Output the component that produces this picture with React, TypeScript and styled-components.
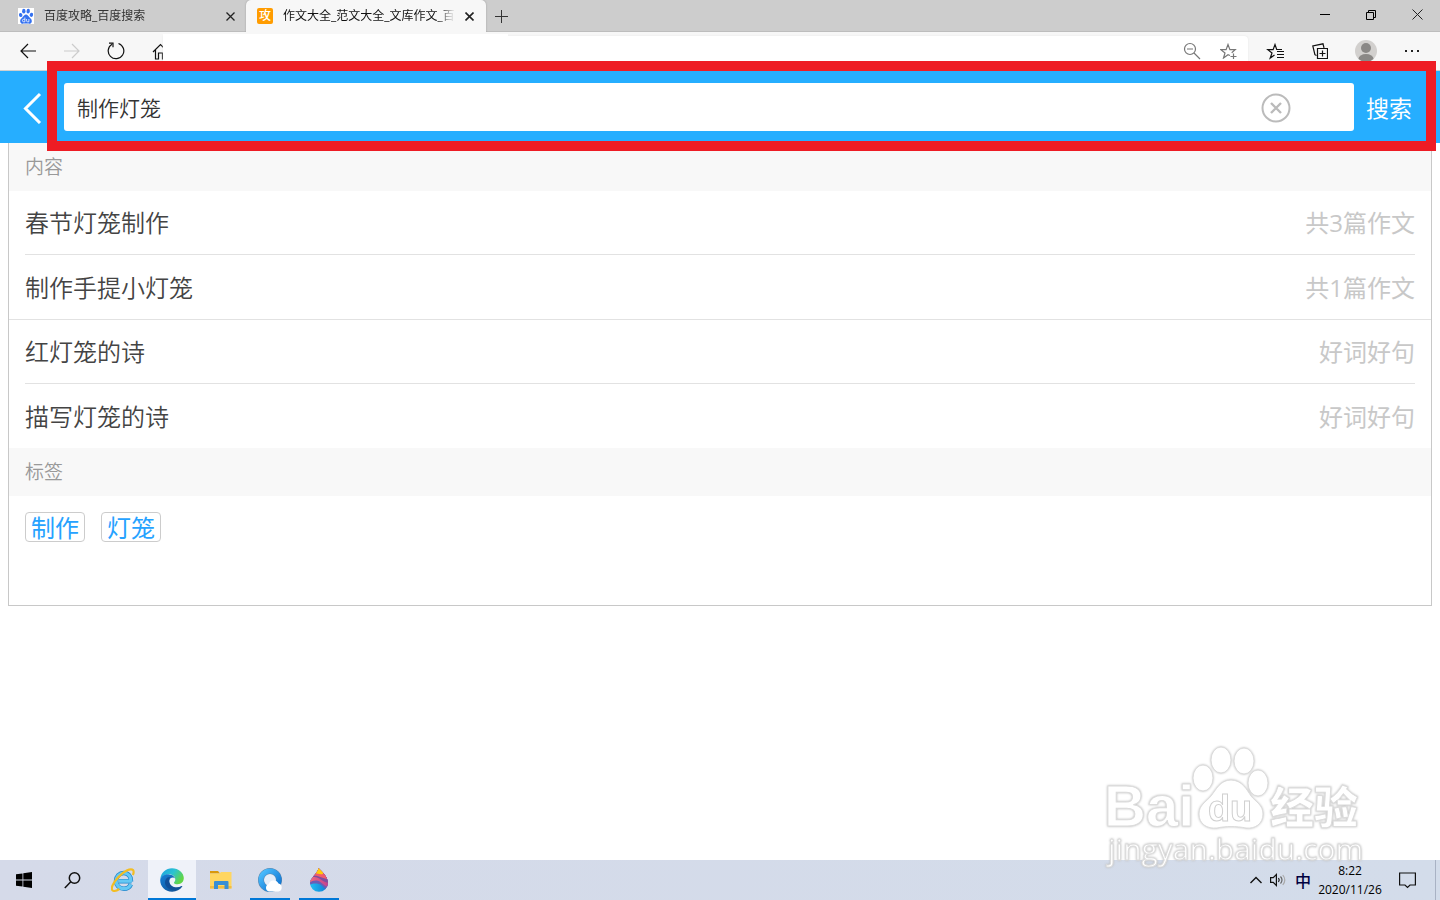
import React from "react";
import styled, { createGlobalStyle, css } from "styled-components";

const GlobalStyle = createGlobalStyle`
  *, *::before, *::after { box-sizing: border-box; }
  body { margin: 0; background: #fff; }
  body, button, input { font-family: "Open Sans", "Noto Sans CJK SC", sans-serif; }
  button { border: 0; padding: 0; background: none; color: inherit; }
  svg { display: block; flex: none; }
`;

const Page = styled.div`
  position: relative;
  display: flex;
  flex-direction: column;
  min-height: 100vh;
`;

const TabStrip = styled.div`
  display: flex;
  height: 32px;
  background: #cdcdcd;
  box-shadow: inset 0 -1px 0 #bdbdbd;
`;

const Tab = styled.div<{ $active?: boolean }>`
  display: flex;
  align-items: center;
  width: ${(p) => (p.$active ? 240 : 246)}px;
  padding: 0 8px 0 ${(p) => (p.$active ? 11 : 18)}px;
  color: ${(p) => (p.$active ? "#111" : "#333")};
  ${(p) =>
    p.$active &&
    css`
      background: #f7f7f7;
      border-radius: 5px 5px 0 0;
      box-shadow: 0 0 2px #999;
      clip-path: inset(-2px -3px 0 -3px);
    `}
`;

const TabTitle = styled.span`
  flex: 1;
  min-width: 0;
  margin: 0 5px 0 10px;
  overflow: hidden;
  white-space: nowrap;
  font-size: 12px;
  line-height: 20px;
  mask-image: linear-gradient(to right, #000 calc(100% - 18px), transparent);
`;

const IconButton = styled.button<{ $w: number }>`
  display: flex;
  flex: none;
  align-items: center;
  justify-content: center;
  width: ${(p) => p.$w}px;
  height: 100%;
`;

const CloseTab = styled(IconButton)`
  height: 18px;
`;

const SiteBadge = styled.span`
  flex: none;
  width: 16px;
  height: 16px;
  border-radius: 2px;
  background: #ff9c00;
  color: #fff;
  font-size: 12px;
  font-weight: 500;
  line-height: 16px;
  text-align: center;
`;

const WindowControls = styled.div`
  display: flex;
  height: 29px;
  margin-left: auto;
`;

const Toolbar = styled.div`
  display: flex;
  height: 39px;
  padding: 0 6px;
  border-bottom: 1px solid #cfcfcf;
  background: #f7f7f7;
`;

const AddressBar = styled.div`
  position: relative;
  display: flex;
  flex: 1;
  justify-content: flex-end;
  margin: 4px 4px 0 -19px;
  padding: 0 2px 4px 0;
  border-radius: 0 4px 0 0;
  background: #fff;
  box-shadow: 0 0 2px #e2e2e2;

  &::before {
    content: "";
    position: absolute;
    top: -2px;
    left: 0;
    width: 345px;
    height: 4px;
    background: #fff;
  }
`;

const ToolGroup = styled.div`
  display: flex;
  gap: 2px;
`;

const SearchHeader = styled.form`
  position: relative;
  z-index: 1;
  display: flex;
  align-items: center;
  height: 72px;
  background: #26aeff;
`;

const SearchField = styled.label`
  display: flex;
  flex: 1;
  align-items: center;
  height: 48px;
  padding: 0 63px 0 13px;
  border-radius: 3px;
  background: #fff;
`;

const SearchInput = styled.input`
  flex: 1;
  min-width: 0;
  height: 40px;
  padding: 0;
  border: 0;
  outline: 0;
  background: none;
  color: #333;
  font-size: 21px;
  font-weight: 350;
`;

const BackButton = styled.button`
  width: 64px;
  padding: 2px 0 0 22px;
`;

const ClearButton = styled.button`
  padding-top: 2px;
`;

const SearchButton = styled.button`
  width: 86px;
  padding: 2px 0 0 12px;
  color: #fff;
  font-size: 23px;
  line-height: 32px;
  text-align: left;
`;

const HighlightFrame = styled.div`
  position: absolute;
  inset: -10px 4px -8px 47px;
  border: 10px solid #ee1c24;
  pointer-events: none;
`;

const Results = styled.main`
  margin: 0 8px;
  padding-bottom: 47px;
  border: 1px solid #c8c8c8;
  border-top: 0;
  font-weight: 350;
`;

const SectionTitle = styled.h2`
  margin: 0;
  padding: 1px 16px 0;
  background: #f8f8f8;
  color: #999;
  font-size: 19px;
  font-weight: 350;
  line-height: 47px;
`;

const ResultList = styled.ul`
  margin: 0;
  padding: 0 16px;
  list-style: none;

  & + & {
    border-top: 1px solid #e2e2e2;
  }
`;

const ResultRow = styled.li`
  display: flex;
  justify-content: space-between;
  padding-top: 1px;
  font-size: 24px;
  line-height: 63px;

  & + & {
    border-top: 1px solid #e2e2e2;
  }
  &:first-child:not(:last-child) {
    line-height: 62px;
  }
`;

const ResultLink = styled.a`
  color: #444;
  text-decoration: none;
`;

const ResultMeta = styled.span`
  color: #c8c8c8;
  font-weight: 400;
`;

const Tags = styled.div`
  display: flex;
  gap: 16px;
  padding: 16px;
`;

const Tag = styled.a`
  padding: 1px 5px 0;
  border: 1px solid #ccc;
  border-radius: 4px;
  color: #26a2ff;
  font-size: 24px;
  font-weight: 400;
  line-height: 27px;
  text-decoration: none;
`;

const Watermark = styled.svg`
  position: absolute;
  right: 70px;
  bottom: 26px;
  z-index: 2;
  pointer-events: none;
  filter: drop-shadow(0 0 1px #bbb);
`;

const Taskbar = styled.footer`
  display: flex;
  height: 40px;
  margin-top: auto;
  background: linear-gradient(to right, #d5dae9, #d3dcea);
`;

const TaskGroup = styled.div`
  display: flex;
  gap: 1px;
  margin-left: 3px;
`;

const TaskButton = styled(IconButton)<{ $running?: boolean; $current?: boolean }>`
  position: relative;
  background: ${(p) => (p.$current ? "#eff2f9" : "none")};

  &::after {
    content: "";
    position: absolute;
    bottom: 0;
    left: ${(p) => (p.$current ? 0 : 4)}px;
    right: ${(p) => (p.$current ? 0 : 4)}px;
    height: ${(p) => (p.$running ? 2 : 0)}px;
    background: #0078d7;
  }
`;

const Tray = styled.div`
  display: flex;
  margin-left: auto;
  padding-right: 4px;
`;

const InputMode = styled(IconButton)`
  color: #000040;
  font-size: 16px;
  font-weight: 500;
`;

const Clock = styled.time`
  display: flex;
  flex-direction: column;
  align-items: center;
  width: 64px;
  padding-top: 1px;
  color: #000;
  font-size: 12px;
  line-height: 19px;
  white-space: nowrap;
`;

const Edge = styled.div`
  width: 1px;
  margin-left: 3px;
  background: #a9b2c4;
`;

function Cross({ size, width = 1 }: { size: number; width?: number }) {
  return (
    <svg width={size} height={size} viewBox={`0 0 ${size} ${size}`} stroke="#222" strokeWidth={width}>
      <path d={`M.5 .5L${size - 0.5} ${size - 0.5}M${size - 0.5} .5L.5 ${size - 0.5}`} />
    </svg>
  );
}

const line = { fill: "none", stroke: "#111", strokeWidth: 1.2 } as const;

function BaiduPaw() {
  return (
    <svg width="16" height="16" viewBox="0 0 16 16">
      <rect width="16" height="16" fill="#fff" />
      <g fill="#3471f0">
        <ellipse cx="2.7" cy="7" rx="1.7" ry="2.1" transform="rotate(-15 2.7 7)" />
        <ellipse cx="5.8" cy="3.2" rx="1.7" ry="2.4" />
        <ellipse cx="10.2" cy="3.2" rx="1.7" ry="2.4" transform="rotate(8 10.2 3.2)" />
        <ellipse cx="13.4" cy="6.8" rx="1.7" ry="2.1" transform="rotate(15 13.4 6.8)" />
        <path d="M8 6.6c1.600 0 2.300 1.500 3.400 2.700 1.300 1.200 2.600 2.200 2.400 4.100-.2 2-1.900 2.500-3.400 2.200-1.600-.3-3.200-.3-4.800 0-1.500.3-3.200-.2-3.400-2.200-.2-1.900 1.100-2.900 2.400-4.100C5.700 8.100 6.400 6.600 8 6.600z" />
      </g>
      <path d="M6.900 9.500v4.300H5.700a1.200 1.200 0 1 1 0-2.500h1.200M8.600 11v1.900c0 .6.300.9.900.9h1.400V11" fill="none" stroke="#fff" strokeWidth=".8" />
    </svg>
  );
}

function EdgeLogo() {
  return (
    <svg width="24" height="24" viewBox="0 0 24 24">
      <defs>
        <linearGradient id="edgeTop" x1="0" y1="0" x2="1" y2=".5">
          <stop offset="0" stopColor="#1b9de2" />
          <stop offset=".55" stopColor="#2bc3d2" />
          <stop offset="1" stopColor="#62d645" />
        </linearGradient>
        <linearGradient id="edgeLow" x1="0" y1="0" x2="1" y2="1">
          <stop offset="0" stopColor="#1680d8" />
          <stop offset="1" stopColor="#114a8b" />
        </linearGradient>
      </defs>
      <path d="M.3 11C1 4.500 6 .2 12 .2c6.600 0 11.800 4.600 11.800 9.800 0 3.800-2.700 6.200-6.200 6.200-2.300 0-4-.8-3.600-1.800.3-.5 1.300-1.300 1.300-3C15.300 8.700 12.600 6.200 8.900 6.200 5 6.200 1.500 8.500.3 11z" fill="url(#edgeTop)" />
      <path d="M.2 12C.5 8.500 4.200 6.100 8.300 6.200c3.500.1 6.200 2 6.900 4.400-1.500-1.700-4.900-1.200-5.700 1.500-1 3.700 2 7 6 7.300 2.300.2 4.500-.4 6.200-1.400.5-.3.900.1.600.6C20 22 16.200 23.900 12 23.800 5.200 23.600 0 18.500.2 12z" fill="url(#edgeLow)" />
      <path d="M5.300 16.500C4.300 12 6.700 8.600 10.300 9c-2.500 2.500-1.100 8.700 3.500 10.200 3 .9 5.900.1 8.200-1.300-3.500 5.100-14.200 5.700-16.700-1.400z" fill="#124f98" />
    </svg>
  );
}

function IELogo() {
  return (
    <svg width="24" height="24" viewBox="0 0 24 24" fill="none">
      <path d="M20.500 13.300H8M20 13.300c.2-5-3-8.300-7.200-8.300-4.500 0-7.700 3.500-7.700 7.800 0 4.600 3.300 7.900 7.800 7.900 3.200 0 5.700-1.500 6.900-4.400" stroke="#1f86cc" strokeWidth="4.600" />
      <path d="M20.800 13.200H7.800M20 13.200c.2-5-3-8.200-7.200-8.200-4.500 0-7.700 3.500-7.700 7.800 0 4.600 3.300 7.900 7.800 7.900 3.200 0 5.700-1.500 6.900-4.400" stroke="#64c8f4" strokeWidth="3.200" />
      <path d="M21.800 7c1-2.200 1.100-3.900.2-4.900C19.800-.3 12.500 3.400 7 9.400 1.700 15.100-.5 20.700 1.700 22.500c1.400 1.100 4 .1 6.700-1.500" stroke="#f3bd22" strokeWidth="2.200" />
    </svg>
  );
}

function FolderLogo() {
  return (
    <svg width="22" height="20" viewBox="0 0 22 20">
      <path d="M0 1h8l2 2.500H0z" fill="#d9980c" />
      <path d="M0 3.500h9.500L11 2h10.500v16.500H0z" fill="#ffd661" />
      <path d="M0 16h21.500v2.500H0z" fill="#f2bd42" />
      <path d="M4 19V12q0-1 1-1h12.500q1 0 1 1v7H14.500V15H8v4z" fill="#398fd4" />
    </svg>
  );
}

function CloudBrowserLogo() {
  return (
    <svg width="24" height="24" viewBox="0 0 24 24">
      <defs>
        <linearGradient id="cloudRing" x1="0" y1="0" x2="1" y2="1">
          <stop offset="0" stopColor="#4fc1ff" />
          <stop offset="1" stopColor="#096fcf" />
        </linearGradient>
      </defs>
      <circle cx="12" cy="12" r="9" fill="#e4eefa" stroke="#5b83a8" strokeWidth="6" />
      <circle cx="12" cy="12" r="9" fill="none" stroke="url(#cloudRing)" strokeWidth="5" />
      <path d="M11 23.500a3.700 3.700 0 0 1-.3-7.200 5.300 5.300 0 0 1 9.800-.8 4.100 4.100 0 0 1 0 8z" fill="#fff" />
    </svg>
  );
}

function PaintLogo() {
  return (
    <svg width="20" height="24" viewBox="0 0 20 24">
      <defs>
        <clipPath id="drop">
          <path d="M9.500 0C13 3.500 19 9 19 15a9 8.700 0 0 1-18 0C1 9.500 8.500 6 9.500 0z" />
        </clipPath>
        <linearGradient id="dropBlue" x1="0" y1="0" x2="1" y2="0">
          <stop offset="0" stopColor="#23c3f5" />
          <stop offset="1" stopColor="#0b76d0" />
        </linearGradient>
        <linearGradient id="dropPink" x1="0" y1="0" x2="1" y2="0">
          <stop offset="0" stopColor="#f26a7e" />
          <stop offset="1" stopColor="#c2408f" />
        </linearGradient>
      </defs>
      <g clipPath="url(#drop)">
        <path d="M0 0h20v24H0z" fill="url(#dropBlue)" />
        <path d="M0 0h20v22c-5 0-6-6-12-6.500-4-.3-6 .5-8 2z" fill="#6a5db5" />
        <path d="M0 0h20v19C15 19 13 13.500 8 12.500c-4-.5-6 1-8 2.500z" fill="url(#dropPink)" />
        <path d="M4 9c6-1 9 5 16 6V0H4z" fill="#7d4f9e" />
        <path d="M4 8c6-1 9 3 16 3V0H4z" fill="#ef5c6c" />
        <path d="M6 0h8v6c-3 .5-5 0-8-1z" fill="#ffcb0a" />
      </g>
    </svg>
  );
}

const topics = [
  { title: "春节灯笼制作", meta: "共3篇作文" },
  { title: "制作手提小灯笼", meta: "共1篇作文" },
];
const phrases = [
  { title: "红灯笼的诗", meta: "好词好句" },
  { title: "描写灯笼的诗", meta: "好词好句" },
];

function Rows({ items }: { items: { title: string; meta: string }[] }) {
  return (
    <ResultList>
      {items.map((item) => (
        <ResultRow key={item.title}>
          <ResultLink href="#">{item.title}</ResultLink>
          <ResultMeta>{item.meta}</ResultMeta>
        </ResultRow>
      ))}
    </ResultList>
  );
}

export default function App() {
  return (
    <Page>
      <GlobalStyle />
      <TabStrip>
        <Tab>
          <BaiduPaw />
          <TabTitle>百度攻略_百度搜索</TabTitle>
          <CloseTab $w={16} aria-label="关闭标签页"><Cross size={9} width={1.3} /></CloseTab>
        </Tab>
        <Tab $active>
          <SiteBadge>攻</SiteBadge>
          <TabTitle>作文大全_范文大全_文库作文_百度文库</TabTitle>
          <CloseTab $w={18} aria-label="关闭标签页"><Cross size={9} width={1.6} /></CloseTab>
        </Tab>
        <IconButton $w={30} aria-label="新建标签页">
          <svg width="13" height="13" stroke="#333"><path d="M6.500 0v13M0 6.500h13" /></svg>
        </IconButton>
        <WindowControls>
          <IconButton $w={46} aria-label="最小化">
            <svg width="10" height="10" stroke="#000"><path d="M0 4.500h10" /></svg>
          </IconButton>
          <IconButton $w={46} aria-label="还原">
            <svg width="10" height="10" fill="none" stroke="#000"><path d="M.5 2.500h7v7h-7zM2.500 2.500v-2h7v7h-2" /></svg>
          </IconButton>
          <IconButton $w={46} aria-label="关闭"><Cross size={11} /></IconButton>
        </WindowControls>
      </TabStrip>

      <Toolbar>
        <IconButton $w={44} aria-label="后退">
          <svg width="16" height="16" {...line}><path d="M16 8H1M8 1L1 8l7 7" /></svg>
        </IconButton>
        <IconButton $w={44} aria-label="前进">
          <svg width="16" height="16" {...line} stroke="#ccc"><path d="M0 8h15M8 1l7 7-7 7" /></svg>
        </IconButton>
        <IconButton $w={44} aria-label="刷新">
          <svg width="18" height="18" {...line}><path d="M11.500 1.500A7.800 7.800 0 1 1 5 2.200M2 1.200h4v4" /></svg>
        </IconButton>
        <IconButton $w={44} aria-label="主页">
          <svg width="16" height="18" {...line}><path d="M1 10L8.500 2.500 16 10M3.500 8v9h3v-6h4v6h3.500V8" /></svg>
        </IconButton>
        <AddressBar>
          <IconButton $w={36} aria-label="缩小">
            <svg width="18" height="18" {...line} stroke="#777"><circle cx="7" cy="7" r="5.500" /><path d="M4 7h6M11 11l6 6" /></svg>
          </IconButton>
          <IconButton $w={36} aria-label="收藏此页">
            <svg width="17" height="16" {...line} stroke="#777"><path d="M10 12.500L8 11.700 3.500 15 5 10 .8 6.700h5.300L8 1.500l1.900 5.200h5.300L11.700 9.700M13.500 10.500v6M10.500 13.500h6" /></svg>
          </IconButton>
        </AddressBar>
        <ToolGroup>
          <IconButton $w={44} aria-label="收藏夹">
            <svg width="15" height="16" overflow="visible" {...line}><path d="M7.500 12L3.200 15.200 5 10 .8 6.700h5.300L8 1.500l1.700 5H15M10 8.500h7M10 11.500h7M10 14.500h7" /></svg>
          </IconButton>
          <IconButton $w={44} aria-label="集锦">
            <svg width="16" height="16" {...line}><path d="M5.500 5.500h10v10h-10zM10.500 7.500v6M7.500 10.500h6M4.500 12.500l-1.600-.8L.8 3 11 .8l1 4" /></svg>
          </IconButton>
          <IconButton $w={44} aria-label="个人资料">
            <svg width="22" height="22" viewBox="0 0 22 22">
              <circle cx="11" cy="11" r="11" fill="#d2d0ce" />
              <circle cx="11" cy="8" r="5" fill="#8a8886" />
              <path d="M3.500 19a7.500 5 0 0 1 15 0 11 11 0 0 1-15 0z" fill="#8a8886" />
            </svg>
          </IconButton>
          <IconButton $w={44} aria-label="更多">
            <svg width="14" height="2" fill="#222"><path d="M0 0h2v2H0zM6 0h2v2H6zM12 0h2v2h-2z" /></svg>
          </IconButton>
        </ToolGroup>
      </Toolbar>

      <SearchHeader onSubmit={(e) => e.preventDefault()}>
        <BackButton type="button" aria-label="返回">
          <svg width="20" height="32" fill="none" stroke="#fff" strokeWidth="3"><path d="M18 2L3.500 16.500 18 31" /></svg>
        </BackButton>
        <SearchField>
          <SearchInput aria-label="搜索作文" defaultValue="制作灯笼" />
          <ClearButton type="button" aria-label="清除">
            <svg width="30" height="30" fill="none" stroke="#bbb" strokeWidth="2">
              <circle cx="15" cy="15" r="13.500" />
              <path d="M10 10l10 10M20 10L10 20" strokeWidth="2.400" />
            </svg>
          </ClearButton>
        </SearchField>
        <SearchButton type="submit">搜索</SearchButton>
        <HighlightFrame />
      </SearchHeader>

      <Results>
        <SectionTitle>内容</SectionTitle>
        <Rows items={topics} />
        <Rows items={phrases} />
        <SectionTitle>标签</SectionTitle>
        <Tags>
          <Tag href="#">制作</Tag>
          <Tag href="#">灯笼</Tag>
        </Tags>
      </Results>

      <Watermark width="270" height="130" fill="#fff" stroke="#dcdcdc" strokeWidth="1">
        <text x="4" y="82" fontFamily="Liberation Sans" fontSize="58" fontWeight="700">Bai</text>
        <ellipse cx="103" cy="34" rx="10" ry="13" />
        <ellipse cx="121" cy="16" rx="10" ry="13" />
        <ellipse cx="144" cy="17" rx="10" ry="13" />
        <ellipse cx="158" cy="39" rx="10" ry="13" />
        <path d="M131 36c11 0 16 10 20 16 5 6 12 9 12 18 0 10-8 15-17 14-10-2-20-2-29 0-10 1-18-4-18-14 0-9 7-12 12-18 5-6 9-16 20-16z" />
        <text x="108" y="77" fontFamily="Liberation Sans" fontSize="36" fontWeight="700" stroke="#d0d0d0">du</text>
        <text x="170" y="80" fontFamily="Noto Sans CJK SC" fontSize="44" fontWeight="900">经验</text>
        <text x="8" y="116" fontFamily="Open Sans" fontSize="30">jingyan.baidu.com</text>
      </Watermark>

      <Taskbar>
        <TaskButton $w={48} aria-label="开始">
          <svg width="16" height="16"><path d="M0 2.300l6.500-.9v6.200H0zM7.300 1.300L16 0v7.600H7.300zM0 8.400h6.500v6.200L0 13.700zM7.300 8.400H16V16l-8.700-1.300z" /></svg>
        </TaskButton>
        <TaskButton $w={48} aria-label="搜索">
          <svg width="17" height="17" {...line} strokeWidth={1.5}><circle cx="10.500" cy="6" r="5.200" /><path d="M6.800 9.800L.8 16" /></svg>
        </TaskButton>
        <TaskGroup>
          <TaskButton $w={48} aria-label="Internet Explorer"><IELogo /></TaskButton>
          <TaskButton $w={48} $running $current aria-label="Microsoft Edge"><EdgeLogo /></TaskButton>
          <TaskButton $w={48} aria-label="文件资源管理器"><FolderLogo /></TaskButton>
          <TaskButton $w={48} $running aria-label="QQ浏览器"><CloudBrowserLogo /></TaskButton>
          <TaskButton $w={48} $running aria-label="画图 3D"><PaintLogo /></TaskButton>
        </TaskGroup>
        <Tray>
          <IconButton $w={24} aria-label="显示隐藏的图标">
            <svg width="12" height="8" {...line} strokeWidth={1.4}><path d="M.5 7L6 1.500 11.500 7" /></svg>
          </IconButton>
          <IconButton $w={20} aria-label="音量">
            <svg width="16" height="14" {...line}>
              <path d="M.6 4.600h2.600L6.400 1.500v11L3.200 9.400H.6zM8.500 5q1.500 2 0 4" />
              <path d="M10.500 3.500q3 3.500 0 7" stroke="#666" />
              <path d="M12.800 2q4 5 0 10" stroke="#aaa" />
            </svg>
          </IconButton>
          <InputMode $w={30}>中</InputMode>
          <Clock><span>8:22</span><span>2020/11/26</span></Clock>
          <IconButton $w={50} aria-label="通知">
            <svg width="17" height="17" {...line}><path d="M.6 1h15.800v12H11l-2.500 2.500L6 13H.6z" /></svg>
          </IconButton>
          <Edge />
        </Tray>
      </Taskbar>
    </Page>
  );
}
